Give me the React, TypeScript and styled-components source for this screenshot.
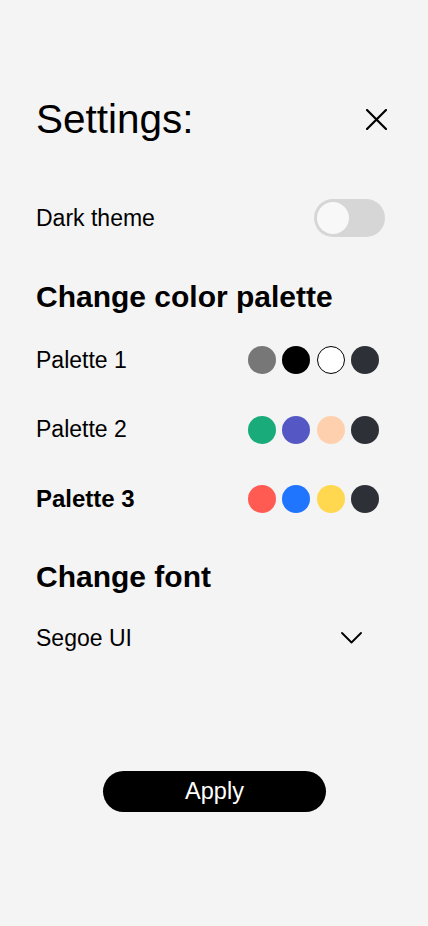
import React, { useState } from "react";
import styled, { createGlobalStyle } from "styled-components";

const GlobalStyle = createGlobalStyle`
  html, body {
    margin: 0;
    padding: 0;
    background: #f4f4f4;
  }
  body {
    font-family: "Liberation Sans", Arial, sans-serif;
    color: #000;
  }
`;

const Page = styled.div`
  width: 428px;
  min-height: 926px;
  box-sizing: border-box;
  padding: 96px 41px 0 36px;
  display: flex;
  flex-direction: column;
`;

const Header = styled.div`
  display: flex;
  align-items: center;
  justify-content: space-between;
  height: 46px;
`;

const Title = styled.h1`
  margin: 0;
  font-size: 40.5px;
  font-weight: 400;
  line-height: 46px;
`;

const CloseButton = styled.button`
  border: none;
  background: none;
  padding: 0;
  width: 21px;
  height: 21px;
  display: flex;
  cursor: pointer;
`;

const Row = styled.div<{ $mt: number; $pr?: number }>`
  display: flex;
  align-items: center;
  justify-content: space-between;
  height: 40px;
  margin-top: ${(p) => p.$mt}px;
  padding-right: ${(p) => p.$pr ?? 0}px;
`;

const Label = styled.span<{ $bold?: boolean }>`
  font-size: ${(p) => (p.$bold ? 24 : 23)}px;
  font-weight: ${(p) => (p.$bold ? 700 : 400)};
`;

const Toggle = styled.button<{ $on: boolean }>`
  width: 71px;
  height: 38px;
  border-radius: 19px;
  border: none;
  padding: 3px;
  margin-right: 2px;
  background: ${(p) => (p.$on ? "#2e3038" : "#d6d6d6")};
  display: flex;
  justify-content: ${(p) => (p.$on ? "flex-end" : "flex-start")};
  cursor: pointer;
`;

const Knob = styled.span`
  width: 32px;
  height: 32px;
  border-radius: 50%;
  background: #f8f8f8;
`;

const SectionTitle = styled.h2<{ $mt: number }>`
  margin: ${(p) => p.$mt}px 0 0;
  font-size: 30px;
  font-weight: 700;
  line-height: 30px;
`;

const Swatches = styled.div`
  display: flex;
  gap: 6.5px;
`;

const Swatch = styled.span<{ $color: string; $outlined?: boolean }>`
  width: 28px;
  height: 28px;
  box-sizing: border-box;
  border-radius: 50%;
  background: ${(p) => p.$color};
  border: ${(p) => (p.$outlined ? "1px solid #000" : "none")};
`;

const ChevronButton = styled.button`
  border: none;
  background: none;
  padding: 0;
  display: flex;
  cursor: pointer;
`;

const ApplyButton = styled.button`
  align-self: flex-start;
  margin-top: 113px;
  margin-left: 67px;
  width: 223px;
  height: 41px;
  border-radius: 21px;
  border: none;
  background: #000;
  color: #fff;
  font-family: "Liberation Sans", Arial, sans-serif;
  font-size: 23.5px;
  cursor: pointer;
`;

const palettes = [
  { name: "Palette 1", colors: ["#777777", "#000000", "#ffffff", "#2e3038"], bold: false },
  { name: "Palette 2", colors: ["#1aab7b", "#5558c4", "#ffd0ad", "#2e3038"], bold: false },
  { name: "Palette 3", colors: ["#ff5b52", "#1f75fe", "#ffd84f", "#2e3038"], bold: true },
];

export default function App() {
  const [dark, setDark] = useState(false);
  return (
    <>
      <GlobalStyle />
      <Page>
        <Header>
          <Title>Settings:</Title>
          <CloseButton aria-label="Close">
            <svg width="21" height="21" viewBox="0 0 21 21" fill="none">
              <path d="M1 1L20 20M20 1L1 20" stroke="#000" strokeWidth="2.2" strokeLinecap="round" />
            </svg>
          </CloseButton>
        </Header>

        <Row $mt={56}>
          <Label>Dark theme</Label>
          <Toggle $on={dark} onClick={() => setDark(!dark)} aria-label="Dark theme">
            <Knob />
          </Toggle>
        </Row>

        <SectionTitle $mt={44}>Change color palette</SectionTitle>

        {palettes.map((p, i) => (
          <Row key={p.name} $mt={i === 0 ? 28 : 29.5} $pr={8}>
            <Label $bold={p.bold}>{p.name}</Label>
            <Swatches>
              {p.colors.map((c, j) => (
                <Swatch key={j} $color={c} $outlined={c === "#ffffff"} />
              ))}
            </Swatches>
          </Row>
        ))}

        <SectionTitle $mt={43}>Change font</SectionTitle>

        <Row $mt={26} $pr={25}>
          <Label>Segoe UI</Label>
          <ChevronButton aria-label="Choose font">
            <svg width="21" height="12" viewBox="0 0 21 12" fill="none">
              <path d="M1 1L10.5 10.5L20 1" stroke="#000" strokeWidth="1.8" strokeLinecap="round" strokeLinejoin="round" />
            </svg>
          </ChevronButton>
        </Row>

        <ApplyButton>Apply</ApplyButton>
      </Page>
    </>
  );
}
